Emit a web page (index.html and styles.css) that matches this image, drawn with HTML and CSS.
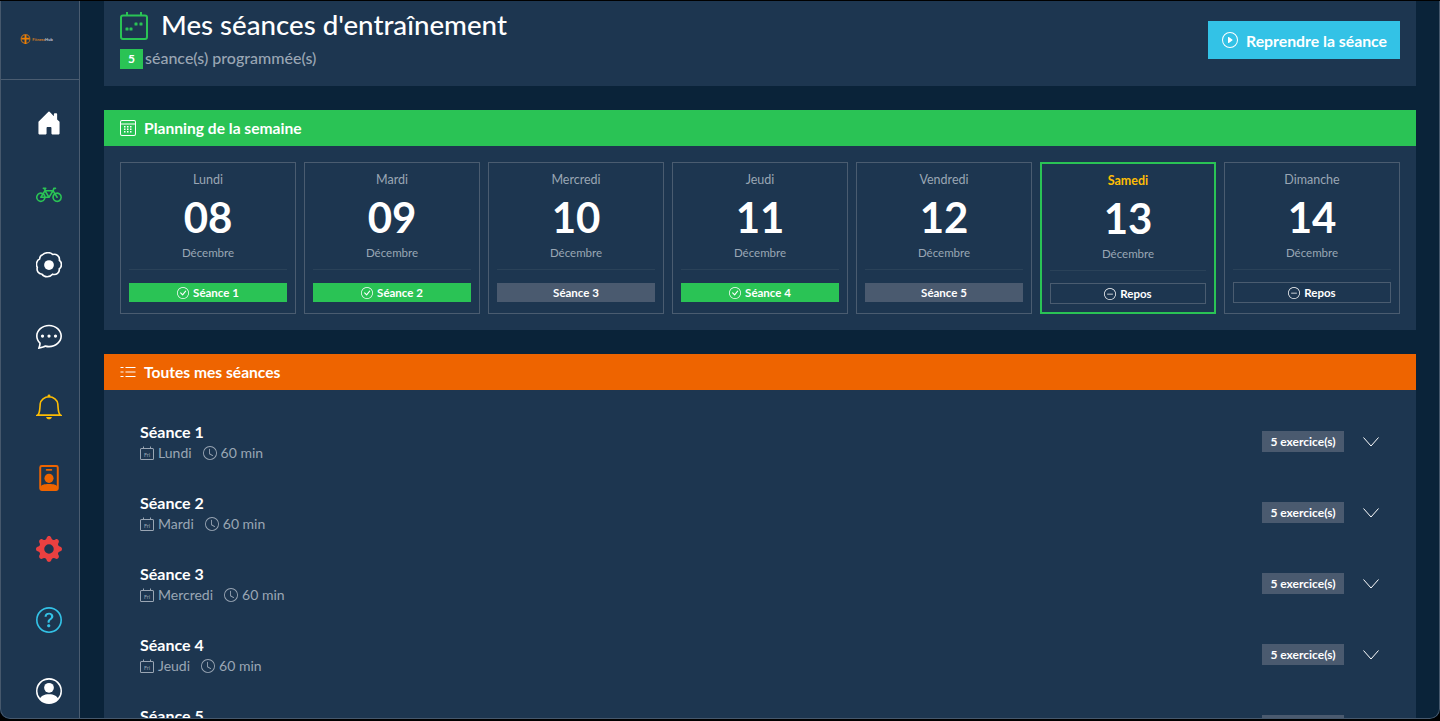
FILE: index.html
```html
<!DOCTYPE html>
<html lang="fr">
<head>
<meta charset="utf-8">
<title>Mes séances d'entraînement</title>
<link rel="stylesheet" href="styles.css">
</head>
<body>
<svg class="defs" width="0" height="0" aria-hidden="true">
  <symbol id="i-check" viewBox="0 0 16 16"><path d="M8 15A7 7 0 1 1 8 1a7 7 0 0 1 0 14zm0 1A8 8 0 1 0 8 0a8 8 0 0 0 0 16z"/><path d="M10.97 4.97a.235.235 0 0 0-.02.022L7.477 9.417 5.384 7.323a.75.75 0 0 0-1.06 1.06L6.97 11.03a.75.75 0 0 0 1.079-.02l3.992-4.99a.75.75 0 0 0-1.071-1.05z"/></symbol>
  <symbol id="i-dash" viewBox="0 0 16 16"><path d="M8 15A7 7 0 1 1 8 1a7 7 0 0 1 0 14zm0 1A8 8 0 1 0 8 0a8 8 0 0 0 0 16z"/><path d="M4 8a.5.5 0 0 1 .5-.5h7a.5.5 0 0 1 0 1h-7A.5.5 0 0 1 4 8z"/></symbol>
  <symbol id="i-clock" viewBox="0 0 16 16"><path d="M8 3.5a.5.5 0 0 0-1 0V9a.5.5 0 0 0 .252.434l3.5 2a.5.5 0 0 0 .496-.868L8 8.71V3.5z"/><path d="M8 16A8 8 0 1 0 8 0a8 8 0 0 0 0 16zm7-8A7 7 0 1 1 1 8a7 7 0 0 1 14 0z"/></symbol>
  <symbol id="i-chev" viewBox="0 0 16 10"><path class="chev-line" d="M.5.5 8 9 15.500.5"/></symbol>
  <symbol id="i-cal" viewBox="0 0 14 14"><path d="M3 .5h1V2h6V.5h1V2h1.500A1.500 1.500 0 0 1 14 3.500v9a1.500 1.500 0 0 1-1.500 1.500h-11A1.500 1.500 0 0 1 0 12.500v-9A1.500 1.500 0 0 1 1.500 2H3V.5zM1.500 3a.5.5 0 0 0-.5.5V13h12V3.500a.5.5 0 0 0-.5-.5h-11z"/><text x="7" y="10.500" text-anchor="middle" class="cal-text">Fri</text></symbol>
</svg>

<div class="window">
  <nav class="sidebar">
    <div class="brand">
      <svg class="brand-mark" viewBox="0 0 12 12"><circle cx="6" cy="5.500" r="4.800" fill="none" stroke="#b06a20" stroke-width="1.200"/><path d="M5 1h2v3h3.500v2H7v5H5V6H1.500V4H5z" fill="#f08000"/></svg>
      <span class="brand-name"><b>Fitness</b>Hub</span>
    </div>
    <ul class="nav">
      <li><svg class="nav-icon white" viewBox="0 0 16 16"><path d="M6.500 14.500V11a.5.5 0 0 1 .5-.5h2a.5.5 0 0 1 .5.5v3.500a.5.5 0 0 0 .5.5h4a.5.5 0 0 0 .5-.5v-7a.5.5 0 0 0-.146-.354L13 5.793V2.500a.5.5 0 0 0-.5-.5h-1a.5.5 0 0 0-.5.5v1.293L8.354 1.146a.5.5 0 0 0-.708 0l-6 6A.5.5 0 0 0 1.500 7.500v7a.5.5 0 0 0 .5.5h4a.5.5 0 0 0 .5-.5z"/></svg></li>
      <li><svg class="nav-icon green" viewBox="0 0 16 16"><path d="M4 4.500a.5.5 0 0 1 .5-.5H6a.5.5 0 0 1 0 1v.5h4.140l.386-1.158A.5.5 0 0 1 11 4h1a.5.5 0 0 1 0 1h-.64l-.311.935.807 1.290a3 3 0 1 1-.848.530l-.508-.812-2.076 3.322A.5.5 0 0 1 8 10.500H5.959a3 3 0 1 1-1.815-3.274L5 5.856V5h-.5a.5.5 0 0 1-.5-.5zm1.500 2.443-.508.814c.5.444.85 1.054.967 1.743h1.139L5.500 6.943zM8 9.057 9.598 6.500H6.402L8 9.057zM4.937 9.500a1.997 1.997 0 0 0-.487-.877l-.548.877h1.035zM3.603 8.092A2 2 0 1 0 4.937 10.500H3a.5.5 0 0 1-.424-.765l1.027-1.643zm7.947.530a2 2 0 1 0 .848-.53l1.026 1.643a.5.5 0 1 1-.848.530L11.550 8.623z"/></svg></li>
      <li><svg class="nav-icon white" viewBox="0 0 16 16"><circle cx="8" cy="8" r="3"/><path class="line" d="M4 1.700C5.500.2 8.800-.1 10.300 1.500 12.300.9 14.800 2.600 14.400 5.100c1.700 1.300 1.700 4-.1 5.300.4 2.300-1.800 4-4.100 3.300C8.600 15.700 5 15.700 3.700 13.700 1.500 13.500.2 11.500.8 9.500-.3 7.500.5 5 2.200 4.300 2.300 3 3 2 4 1.700z"/></svg></li>
      <li><svg class="nav-icon white" viewBox="0 0 16 16"><path d="M5 8a1 1 0 1 1-2 0 1 1 0 0 1 2 0zm4 0a1 1 0 1 1-2 0 1 1 0 0 1 2 0zm3 1a1 1 0 1 0 0-2 1 1 0 0 0 0 2z"/><path d="m2.165 15.803.020-.004c1.830-.363 2.948-.842 3.468-1.105A9.060 9.060 0 0 0 8 15c4.418 0 8-3.134 8-7s-3.582-7-8-7-8 3.134-8 7c0 1.760.743 3.370 1.970 4.600a10.437 10.437 0 0 1-.524 2.318l-.003.011a10.722 10.722 0 0 1-.244.637c-.079.186.074.394.273.362a21.673 21.673 0 0 0 .693-.125zm.8-3.108a1 1 0 0 0-.287-.801C1.618 10.830 1 9.468 1 8c0-3.192 3.004-6 7-6s7 2.808 7 6c0 3.193-3.004 6-7 6a8.060 8.060 0 0 1-2.088-.272 1 1 0 0 0-.711.074c-.387.196-1.240.570-2.634.893a10.970 10.970 0 0 0 .398-2z"/></svg></li>
      <li><svg class="nav-icon yellow" viewBox="0 0 16 16"><path class="line" d="M.9 13h14.200c-.8-.5-1.300-1.500-1.500-4.500l-.2-2.500C13.100 3.600 10.800 1.700 8 1.700S2.900 3.600 2.600 6l-.2 2.500C2.200 11.500 1.700 12.500.9 13z"/><circle cx="8" cy="1.200" r=".9"/><path d="M6.200 14.100h3.600c-.2.900-1 1.500-1.800 1.500s-1.600-.6-1.800-1.500z"/></svg></li>
      <li><svg class="nav-icon orange" viewBox="0 0 16 16"><path d="M3.500 0h9A1.500 1.500 0 0 1 14 1.500v13a1.500 1.500 0 0 1-1.500 1.500h-9A1.500 1.500 0 0 1 2 14.500v-13A1.500 1.500 0 0 1 3.500 0zm0 1.200a.3.3 0 0 0-.3.3v13a.3.3 0 0 0 .3.3h9a.3.3 0 0 0 .3-.3v-13a.3.3 0 0 0-.3-.3h-9z"/><rect x="6" y="2.500" width="4" height="1" rx=".5"/><circle cx="8" cy="8.200" r="2.800"/><path d="M3 15v-1.500c0-1.300 2-1.800 5-1.800s5 .5 5 1.800V15z"/></svg></li>
      <li><svg class="nav-icon red" viewBox="0 0 16 16"><path d="M9.405 1.050c-.413-1.400-2.397-1.400-2.810 0l-.1.340a1.464 1.464 0 0 1-2.105.872l-.31-.17c-1.283-.698-2.686.705-1.987 1.987l.169.311c.446.820.023 1.841-.872 2.105l-.34.1c-1.400.413-1.400 2.397 0 2.810l.34.1a1.464 1.464 0 0 1 .872 2.105l-.17.310c-.698 1.283.705 2.686 1.987 1.987l.311-.169a1.464 1.464 0 0 1 2.105.872l.1.340c.413 1.400 2.397 1.400 2.810 0l.1-.34a1.464 1.464 0 0 1 2.105-.872l.31.170c1.283.698 2.686-.705 1.987-1.987l-.169-.311a1.464 1.464 0 0 1 .872-2.105l.34-.1c1.400-.413 1.400-2.397 0-2.810l-.34-.1a1.464 1.464 0 0 1-.872-2.105l.17-.31c.698-1.283-.705-2.686-1.987-1.987l-.311.169a1.464 1.464 0 0 1-2.105-.872l-.1-.34zM8 10.930a2.929 2.929 0 1 1 0-5.860 2.929 2.929 0 0 1 0 5.858z"/></svg></li>
      <li><svg class="nav-icon cyan" viewBox="0 0 16 16"><path d="M8 15A7 7 0 1 1 8 1a7 7 0 0 1 0 14zm0 1A8 8 0 1 0 8 0a8 8 0 0 0 0 16z"/><path d="M5.255 5.786a.237.237 0 0 0 .241.247h.825c.138 0 .248-.113.266-.25.09-.656.540-1.134 1.342-1.134.686 0 1.314.343 1.314 1.168 0 .635-.374.927-.965 1.371-.673.489-1.206 1.060-1.168 1.987l.003.217a.25.25 0 0 0 .25.246h.811a.25.25 0 0 0 .25-.25v-.105c0-.718.273-.927 1.010-1.486.609-.463 1.244-.977 1.244-2.056 0-1.511-1.276-2.241-2.673-2.241-1.267 0-2.655.590-2.750 2.286zm1.557 5.763c0 .533.425.927 1.010.927.609 0 1.028-.394 1.028-.927 0-.552-.42-.94-1.029-.94-.584 0-1.009.388-1.009.94z"/></svg></li>
      <li><svg class="nav-icon white" viewBox="0 0 16 16"><path d="M11 6a3 3 0 1 1-6 0 3 3 0 0 1 6 0z"/><path fill-rule="evenodd" d="M0 8a8 8 0 1 1 16 0A8 8 0 0 1 0 8zm8-7a7 7 0 0 0-5.468 11.370C3.242 11.226 4.805 10 8 10s4.757 1.225 5.468 2.370A7 7 0 0 0 8 1z"/></svg></li>
    </ul>
  </nav>

  <main class="content">
    <header class="page-head">
      <div class="head-text">
        <div class="title-row">
          <svg class="title-icon" viewBox="0 0 28 28"><path d="M6 0h2v2.500h12V0h2v2.500h3a3 3 0 0 1 3 3V25a3 3 0 0 1-3 3H3a3 3 0 0 1-3-3V5.500a3 3 0 0 1 3-3h3V0zM3 4.500a1 1 0 0 0-1 1V25a1 1 0 0 0 1 1h22a1 1 0 0 0 1-1V5.500a1 1 0 0 0-1-1H3z"/><rect x="5.500" y="15.500" width="3" height="3" rx=".6"/><rect x="9.500" y="15.500" width="3" height="3" rx=".6"/><rect x="14.500" y="10.500" width="3" height="3" rx=".6"/><rect x="19.500" y="10.500" width="3" height="3" rx=".6"/></svg>
          <h1>Mes séances d'entraînement</h1>
        </div>
        <p class="count"><span class="count-badge">5</span><span class="count-label">séance(s) programmée(s)</span></p>
      </div>
      <button class="resume"><svg class="resume-icon" viewBox="0 0 16 16"><path d="M8 15A7 7 0 1 1 8 1a7 7 0 0 1 0 14zm0 1A8 8 0 1 0 8 0a8 8 0 0 0 0 16z"/><path d="M6.271 5.055a.5.5 0 0 1 .52.038l3.500 2.500a.5.5 0 0 1 0 .814l-3.500 2.500A.5.5 0 0 1 6 10.500v-5a.5.5 0 0 1 .271-.445z"/></svg>Reprendre la séance</button>
    </header>

    <section class="panel">
      <h2 class="panel-head head-green"><svg class="head-icon" viewBox="0 0 16 16"><path d="M2 0h12a2 2 0 0 1 2 2v12a2 2 0 0 1-2 2H2a2 2 0 0 1-2-2V2a2 2 0 0 1 2-2zm0 1a1 1 0 0 0-1 1v1.500h14V2a1 1 0 0 0-1-1H2zM1 4.500V14a1 1 0 0 0 1 1h12a1 1 0 0 0 1-1V4.500H1z"/><path d="M4 6h1.500v1.500H4zm3 0h1.500v1.500H7zm3 0h1.500v1.500H10zM4 8.500h1.500V10H4zm3 0h1.500V10H7zm3 0h1.500V10H10zM4 11h1.500v1.500H4zm3 0h1.500v1.500H7zm3 0h1.500v1.500H10z"/></svg>Planning de la semaine</h2>
      <div class="week">
        <article class="day"><span class="day-name">Lundi</span><strong class="day-num">08</strong><span class="day-month">Décembre</span><span class="tag tag-done"><svg class="tag-icon"><use href="#i-check"/></svg>Séance 1</span></article>
        <article class="day"><span class="day-name">Mardi</span><strong class="day-num">09</strong><span class="day-month">Décembre</span><span class="tag tag-done"><svg class="tag-icon"><use href="#i-check"/></svg>Séance 2</span></article>
        <article class="day"><span class="day-name">Mercredi</span><strong class="day-num">10</strong><span class="day-month">Décembre</span><span class="tag tag-todo">Séance 3</span></article>
        <article class="day"><span class="day-name">Jeudi</span><strong class="day-num">11</strong><span class="day-month">Décembre</span><span class="tag tag-done"><svg class="tag-icon"><use href="#i-check"/></svg>Séance 4</span></article>
        <article class="day"><span class="day-name">Vendredi</span><strong class="day-num">12</strong><span class="day-month">Décembre</span><span class="tag tag-todo">Séance 5</span></article>
        <article class="day day-today"><span class="day-name">Samedi</span><strong class="day-num">13</strong><span class="day-month">Décembre</span><span class="tag tag-rest"><svg class="tag-icon"><use href="#i-dash"/></svg>Repos</span></article>
        <article class="day"><span class="day-name">Dimanche</span><strong class="day-num">14</strong><span class="day-month">Décembre</span><span class="tag tag-rest"><svg class="tag-icon"><use href="#i-dash"/></svg>Repos</span></article>
      </div>
    </section>

    <section class="panel">
      <h2 class="panel-head head-orange"><svg class="head-icon" viewBox="0 0 16 16"><path d="M5.500 3h10v1h-10zm0 4.500h10v1h-10zm0 4.500h10v1h-10z"/><path d="M.5 3h3v1h-3zm0 4.500h3v1h-3zm0 4.500h3v1h-3z"/></svg>Toutes mes séances</h2>
      <div class="sessions">
        <div class="session"><div class="session-info"><h3>Séance 1</h3><p class="meta"><svg class="meta-icon"><use href="#i-cal"/></svg><span>Lundi</span><svg class="meta-icon clock"><use href="#i-clock"/></svg><span>60 min</span></p></div><span class="ex-badge">5 exercice(s)</span><svg class="chev"><use href="#i-chev"/></svg></div>
        <div class="session"><div class="session-info"><h3>Séance 2</h3><p class="meta"><svg class="meta-icon"><use href="#i-cal"/></svg><span>Mardi</span><svg class="meta-icon clock"><use href="#i-clock"/></svg><span>60 min</span></p></div><span class="ex-badge">5 exercice(s)</span><svg class="chev"><use href="#i-chev"/></svg></div>
        <div class="session"><div class="session-info"><h3>Séance 3</h3><p class="meta"><svg class="meta-icon"><use href="#i-cal"/></svg><span>Mercredi</span><svg class="meta-icon clock"><use href="#i-clock"/></svg><span>60 min</span></p></div><span class="ex-badge">5 exercice(s)</span><svg class="chev"><use href="#i-chev"/></svg></div>
        <div class="session"><div class="session-info"><h3>Séance 4</h3><p class="meta"><svg class="meta-icon"><use href="#i-cal"/></svg><span>Jeudi</span><svg class="meta-icon clock"><use href="#i-clock"/></svg><span>60 min</span></p></div><span class="ex-badge">5 exercice(s)</span><svg class="chev"><use href="#i-chev"/></svg></div>
        <div class="session"><div class="session-info"><h3>Séance 5</h3><p class="meta"><svg class="meta-icon"><use href="#i-cal"/></svg><span>Vendredi</span><svg class="meta-icon clock"><use href="#i-clock"/></svg><span>60 min</span></p></div><span class="ex-badge">5 exercice(s)</span><svg class="chev"><use href="#i-chev"/></svg></div>
      </div>
    </section>
  </main>
  <div class="frame"></div>
</div>
</body>
</html>
```

FILE: styles.css
```css
* { box-sizing: border-box; }
html, body { margin: 0; height: 100%; overflow: hidden; background: #000; }
body { font-family: Lato, "Noto Sans", sans-serif; color: #fff; }
.defs { position: absolute; }
h1, h2, h3, p, ul { margin: 0; padding: 0; }

.window {
  position: relative;
  display: flex;
  height: 718px;
  margin-top: 1px;
  background: #0a2339;
  border-radius: 0 0 10px 10px;
  overflow: hidden;
}
.frame {
  position: absolute;
  inset: 0;
  border: 1px solid #46586c;
  border-top: 0;
  border-radius: 0 0 10px 10px;
  pointer-events: none;
}

.sidebar {
  flex: 0 0 80px;
  height: 100%;
  background: #1d3650;
  border-right: 1px solid #4a5c70;
}
.brand {
  height: 79px;
  display: flex;
  align-items: center;
  justify-content: center;
  gap: 1px;
  padding: 0 6px 2px 0;
  border-bottom: 1px solid #4a5c70;
}
.brand-mark { width: 11px; height: 11px; }
.brand-name { font-size: 4px; font-weight: 700; color: #c4ccd6; }
.brand-name b { color: #c87a28; }
.nav { list-style: none; padding: 7px 0 0 19px; }
.nav li { height: 71px; display: flex; align-items: center; justify-content: center; }
.nav-icon { width: 26px; height: 26px; fill: currentColor; }
.nav-icon .line { fill: none; stroke: currentColor; stroke-width: 1; }
.white { color: #fff; }
.green { color: #2ac355; }
.yellow { color: #fdbd04; }
.orange { color: #ee6400; }
.red { color: #ea4040; }
.cyan { color: #33c2e6; }

.content { flex: 1; min-width: 0; height: 100%; overflow: hidden; padding: 0 24px; }

.page-head {
  height: 85px;
  background: #1d3650;
  display: flex;
  align-items: flex-start;
  justify-content: space-between;
  padding: 10px 16px 0;
  margin-bottom: 24px;
}
.title-row { display: flex; align-items: center; gap: 13px; height: 30px; }
.title-icon { width: 28px; height: 28px; fill: #2ac355; }
h1 { font-size: 27.7px; font-weight: 500; line-height: 30px; margin-top: -2px; color: #fff; }
.count { display: flex; align-items: flex-start; margin-top: 8px; font-size: 16px; font-weight: 500; line-height: 18px; color: #9aa6b4; }
.count-badge { width: 23px; height: 20px; margin-right: 2px; background: #2ac355; color: #fff; font-size: 12px; font-weight: 700; line-height: 20px; text-align: center; }
.resume {
  display: flex;
  align-items: center;
  gap: 8px;
  height: 38px;
  margin-top: 10px;
  padding: 0 13px 0 14px;
  border: 0;
  background: #33c2e6;
  color: #fff;
  font: 700 15.8px Lato, sans-serif;
}
.resume-icon { width: 16px; height: 16px; fill: #fff; }

.panel { background: #1d3650; margin-bottom: 24px; }
.panel-head { display: flex; align-items: center; gap: 8px; height: 36px; padding: 0 16px; font-size: 15.6px; font-weight: 700; color: #fff; }
.head-icon { width: 16px; height: 16px; fill: #fff; flex: none; }
.head-green { background: #2ac355; }
.head-orange { background: #ee6400; }

.week { display: grid; grid-template-columns: repeat(7, 1fr); gap: 8px; padding: 16px; }
.day {
  height: 152px;
  border: 1px solid #4a5c70;
  padding: 8px;
  display: flex;
  flex-direction: column;
  align-items: center;
}
.day-name { font-size: 12.5px; line-height: 18px; color: #9aa6b4; }
.day-num { font-size: 42px; font-weight: 700; line-height: 50px; margin-top: 3px; color: #fff; }
.day-month {
  width: 100%;
  height: 25px;
  margin: 3px 0 13px;
  padding-bottom: 8px;
  border-bottom: 1px solid #2a4259;
  font-size: 11.5px;
  line-height: 16px;
  text-align: center;
  color: #9aa6b4;
}
.day-today { border: 2px solid #2ac355; }
.day-today .day-name { color: #fdbd04; font-weight: 700; }
.tag {
  width: 100%;
  height: 19px;
  display: flex;
  align-items: center;
  justify-content: center;
  gap: 4px;
  font-size: 11.5px;
  font-weight: 700;
  color: #fff;
}
.tag-icon { width: 12px; height: 12px; fill: #fff; }
.tag-done { background: #2ac355; }
.tag-todo { background: #4a5a6f; }
.tag-rest { height: 21px; margin-top: -1px; border: 1px solid #4a5c70; }

.sessions { padding: 18px 37px 0 36px; }
.session { display: flex; align-items: center; height: 71px; padding-bottom: 4px; }
.session-info { flex: 1; }
h3 { font-size: 16px; font-weight: 700; line-height: 20px; color: #fff; }
.meta { display: flex; align-items: center; margin-top: 2px; font-size: 14px; line-height: 18px; color: #9aa6b4; }
.meta span { margin-left: 4px; }
.meta-icon { width: 14px; height: 14px; fill: #9aa6b4; }
.clock { margin-left: 11px; }
.cal-text { font: 400 5.5px Lato, sans-serif; }
.ex-badge { height: 21px; width: 82px; background: #4a5a6f; color: #fff; font-size: 12px; font-weight: 700; line-height: 21px; text-align: center; }
.chev { width: 16px; height: 10px; margin-left: 19px; fill: none; stroke: #fff; stroke-width: 1; }
```
